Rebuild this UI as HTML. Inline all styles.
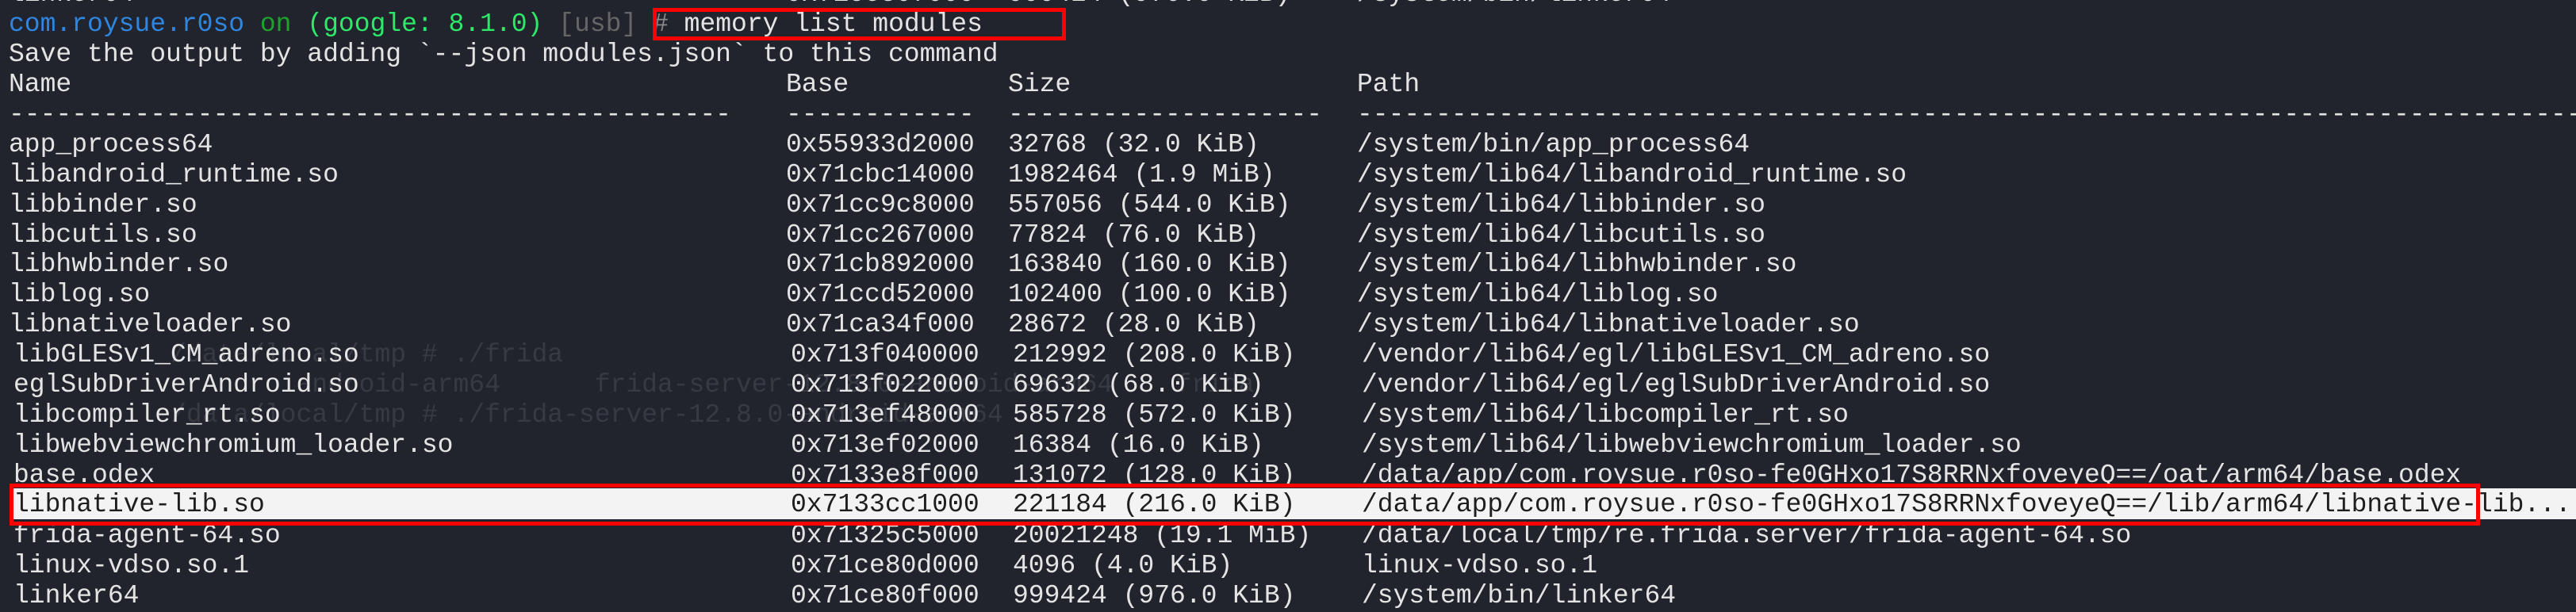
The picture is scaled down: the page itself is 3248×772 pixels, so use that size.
<!DOCTYPE html>
<html><head><meta charset="utf-8"><style>
html,body{margin:0;padding:0;}
body{width:3248px;height:768px;background:#22242d;overflow:hidden;position:relative;font-family:"Liberation Mono","DejaVu Sans Mono",monospace;font-size:33px;color:#e4e4e4;}
.w{position:absolute;left:0;top:4px;width:3248px;height:768px;}
.l{position:absolute;left:0;height:38px;line-height:38px;white-space:pre;width:3248px;}
.l span{position:absolute;top:0;}
.g{color:#373a43;}
.box{position:absolute;border:5px solid #ff0000;box-sizing:border-box;}
.hl{position:absolute;left:14px;top:616px;width:3234px;height:39px;background:#f3f3f3;}
.hl2{color:#1e1e1e;}
</style></head><body>
<div class="hl"></div>
<div class="w">
<div class="l" style="top:-30px"><span style="left:11px">linker64</span><span style="left:991px">0x71ce80f000</span><span style="left:1271px">999424 (976.0 KiB)</span><span style="left:1711px">/system/bin/linker64</span></div>
<div class="l" style="top:8px"><span style="left:11px"><span style="position:static;color:#2f86e0">com.roysue.r0so</span> <span style="position:static;color:#1ea32a">on</span> <span style="position:static;color:#2ee86a">(google: 8.1.0)</span> <span style="position:static;color:#666">[usb]</span> <span style="position:static;color:#888">#</span> memory list modules</span></div>
<div class="l" style="top:46px"><span style="left:11px">Save the output by adding `--json modules.json` to this command</span></div>
<div class="l" style="top:84px"><span style="left:11px">Name</span><span style="left:991px">Base</span><span style="left:1271px">Size</span><span style="left:1711px">Path</span></div>
<div class="l" style="top:122px"><span style="left:11px">----------------------------------------------</span><span style="left:991px">------------</span><span style="left:1271px">--------------------</span><span style="left:1711px">------------------------------------------------------------------------------</span></div>
<div class="l" style="top:160px"><span style="left:11px">app_process64</span><span style="left:991px">0x55933d2000</span><span style="left:1271px">32768 (32.0 KiB)</span><span style="left:1711px">/system/bin/app_process64</span></div>
<div class="l" style="top:198px"><span style="left:11px">libandroid_runtime.so</span><span style="left:991px">0x71cbc14000</span><span style="left:1271px">1982464 (1.9 MiB)</span><span style="left:1711px">/system/lib64/libandroid_runtime.so</span></div>
<div class="l" style="top:236px"><span style="left:11px">libbinder.so</span><span style="left:991px">0x71cc9c8000</span><span style="left:1271px">557056 (544.0 KiB)</span><span style="left:1711px">/system/lib64/libbinder.so</span></div>
<div class="l" style="top:274px"><span style="left:11px">libcutils.so</span><span style="left:991px">0x71cc267000</span><span style="left:1271px">77824 (76.0 KiB)</span><span style="left:1711px">/system/lib64/libcutils.so</span></div>
<div class="l" style="top:311px"><span style="left:11px">libhwbinder.so</span><span style="left:991px">0x71cb892000</span><span style="left:1271px">163840 (160.0 KiB)</span><span style="left:1711px">/system/lib64/libhwbinder.so</span></div>
<div class="l" style="top:349px"><span style="left:11px">liblog.so</span><span style="left:991px">0x71ccd52000</span><span style="left:1271px">102400 (100.0 KiB)</span><span style="left:1711px">/system/lib64/liblog.so</span></div>
<div class="l" style="top:387px"><span style="left:11px">libnativeloader.so</span><span style="left:991px">0x71ca34f000</span><span style="left:1271px">28672 (28.0 KiB)</span><span style="left:1711px">/system/lib64/libnativeloader.so</span></div>
<div class="l" style="top:425px"><span class="g" style="left:17px">          /data/local/tmp # ./frida</span><span style="left:17px">libGLESv1_CM_adreno.so</span><span style="left:997px">0x713f040000</span><span style="left:1277px">212992 (208.0 KiB)</span><span style="left:1717px">/vendor/lib64/egl/libGLESv1_CM_adreno.so</span></div>
<div class="l" style="top:463px"><span class="g" style="left:17px">                  android-arm64      frida-server-12.8.0-android-arm64    frida</span><span style="left:17px">eglSubDriverAndroid.so</span><span style="left:997px">0x713f022000</span><span style="left:1277px">69632 (68.0 KiB)</span><span style="left:1717px">/vendor/lib64/egl/eglSubDriverAndroid.so</span></div>
<div class="l" style="top:501px"><span class="g" style="left:17px">          /data/local/tmp # ./frida-server-12.8.0-android-arm64</span><span style="left:17px">libcompiler_rt.so</span><span style="left:997px">0x713ef48000</span><span style="left:1277px">585728 (572.0 KiB)</span><span style="left:1717px">/system/lib64/libcompiler_rt.so</span></div>
<div class="l" style="top:539px"><span style="left:17px">libwebviewchromium_loader.so</span><span style="left:997px">0x713ef02000</span><span style="left:1277px">16384 (16.0 KiB)</span><span style="left:1717px">/system/lib64/libwebviewchromium_loader.so</span></div>
<div class="l" style="top:577px"><span style="left:17px">base.odex</span><span style="left:997px">0x7133e8f000</span><span style="left:1277px">131072 (128.0 KiB)</span><span style="left:1717px">/data/app/com.roysue.r0so-fe0GHxo17S8RRNxfoveyeQ==/oat/arm64/base.odex</span></div>
<div class="l hl2" style="top:614px"><span style="left:17px">libnative-lib.so</span><span style="left:997px">0x7133cc1000</span><span style="left:1277px">221184 (216.0 KiB)</span><span style="left:1717px">/data/app/com.roysue.r0so-fe0GHxo17S8RRNxfoveyeQ==/lib/arm64/libnative-lib...</span></div>
<div class="l" style="top:653px"><span style="left:17px">frida-agent-64.so</span><span style="left:997px">0x71325c5000</span><span style="left:1277px">20021248 (19.1 MiB)</span><span style="left:1717px">/data/local/tmp/re.frida.server/frida-agent-64.so</span></div>
<div class="l" style="top:691px"><span style="left:17px">linux-vdso.so.1</span><span style="left:997px">0x71ce80d000</span><span style="left:1277px">4096 (4.0 KiB)</span><span style="left:1717px">linux-vdso.so.1</span></div>
<div class="l" style="top:729px"><span style="left:17px">linker64</span><span style="left:997px">0x71ce80f000</span><span style="left:1277px">999424 (976.0 KiB)</span><span style="left:1717px">/system/bin/linker64</span></div>
</div>
<div class="box" style="left:823px;top:10px;width:521px;height:41px;"></div>
<div class="box" style="left:12px;top:610px;width:3115px;height:53px;"></div>
</body></html>
